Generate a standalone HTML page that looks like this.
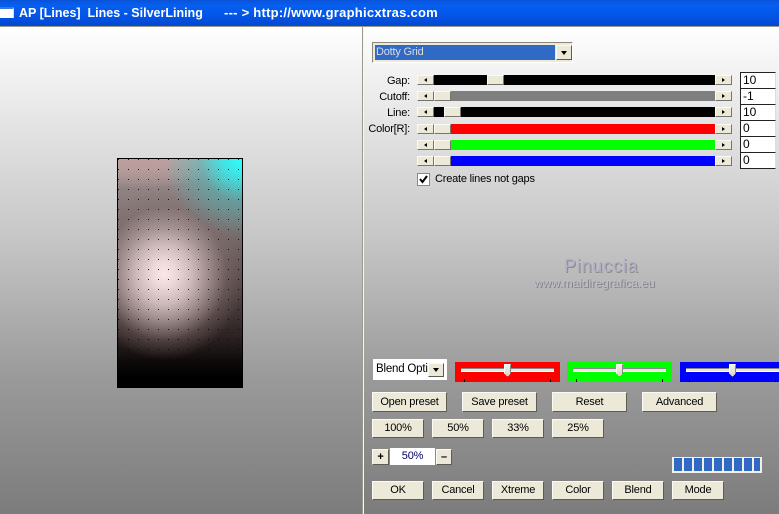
<!DOCTYPE html>
<html><head><meta charset="utf-8"><style>
html,body{margin:0;padding:0}
body{width:779px;height:514px;overflow:hidden;position:relative;font-family:"Liberation Sans",sans-serif;font-size:11px;letter-spacing:-.2px;color:#000}
div,span.a{position:absolute;box-sizing:border-box}
#bg{left:0;top:26px;width:779px;height:488px;background:linear-gradient(#fff 0,#f4f4f4 8%,#c4c4c4 45%,#9a9a9a 72%,#7c7c7c 100%)}
#title{left:0;top:0;width:779px;height:27px;background:linear-gradient(#0a52d8 0,#0660f0 20%,#0355e6 60%,#0348d0 100%);border-bottom:1px solid #9c9a8c}
.t{color:#fff;font-weight:bold;white-space:pre;top:5px;line-height:16px}
.b{background:#ece9d8;border:1px solid;border-color:#fbfaf4 #5e5c52 #5e5c52 #fbfaf4;text-align:center;font-size:11px;line-height:18px}
.tr{left:433px;width:282px;height:10px}
.sb{width:17px;height:10px;background:#ece9d8;border-top:1px solid #fbfaf4;border-left:1px solid #fbfaf4;border-bottom:1px solid #77756a;border-right:1px solid #77756a}
.sb:after{content:"";position:absolute;top:2px;left:6px;border:2px solid transparent}
.l:after{border-right:3px solid #000;border-left:0}
.r:after{border-left:3px solid #000;border-right:0}
.lab{width:100px;left:310px;text-align:right;font-size:11px;line-height:14px}
.in{left:740px;width:36px;height:17px;background:#fff;border:1px solid #000;border-color:#222 #ddd #222 #222;font-size:12px;line-height:14px;padding-left:2px;letter-spacing:0}
.p{top:362px;height:20px}
.st{top:368px;height:4px;background:#e8e8e0;border-top:1px solid #888;border-bottom:1px solid #fff}
.th{top:364px;width:7px;height:13px;background:linear-gradient(#f4f3ea,#d8d6c8);border:1px solid #8a887c;border-top-color:#fff;border-left-color:#fff;clip-path:polygon(0 0,100% 0,100% 70%,50% 100%,0 70%)}
.tk{top:379px;width:1px;height:3px;background:#000}
.sg{top:458px;width:8px;height:13px;background:#316ac5}
#pv{left:117px;top:158px;width:126px;height:230px;border:1px solid #000;
background:
radial-gradient(circle at 100% 0,#2dffff 0,rgba(45,240,240,.85) 18px,rgba(60,195,195,.45) 42px,rgba(90,170,170,0) 78px),
radial-gradient(ellipse 80px 86px at 46px 115px,#fde8e8 0,#ecd8d8 15%,#cdb9b9 35%,rgba(170,150,150,.85) 55%,rgba(130,110,110,.4) 78%,rgba(120,100,100,0) 100%),
radial-gradient(ellipse 75px 30px at 25px 0,#c09c9c 0,rgba(180,150,150,0) 100%),
linear-gradient(#b8a8a8 0,#928484 12%,#766868 35%,#504242 60%,#2c2222 78%,#0c0808 90%,#000 96%)}
</style></head><body>
<div id="bg"></div>
<div id="title"></div>
<div style="left:0;top:7px;width:14px;height:11px;background:#fff;border-top:2px solid #3a78e0;border-right:1px solid #cfe0f8"></div>
<div class="t" style="left:19px;font-size:12.5px;letter-spacing:0">AP [Lines]  Lines - SilverLining</div>
<div class="t" style="left:224px;font-size:13px;letter-spacing:.25px">--- &gt; http://www.graphicxtras.com</div>
<div style="left:362px;top:27px;width:1px;height:487px;background:#9c9a8c"></div>
<div style="left:363px;top:27px;width:1px;height:487px;background:#f6f6f6"></div>

<div id="pv"><svg width="124" height="228" style="position:absolute;left:0;top:0">
<defs><pattern id="d" x="0" y="10" width="10" height="10" patternUnits="userSpaceOnUse"><rect width="1" height="1" fill="#000" fill-opacity=".85"/></pattern></defs>
<rect width="124" height="228" fill="url(#d)"/></svg></div>

<!-- dropdown -->
<div style="left:372px;top:42px;width:201px;height:21px;background:#ece9d8;border:1px solid;border-color:#8a887c #fff #fff #8a887c"></div>
<div style="left:375px;top:45px;width:180px;height:15px;background:#316ac5;color:#ddd;padding-left:1px;line-height:15px;font-size:11px">Dotty Grid</div>
<div class="b" style="left:556px;top:45px;width:16px;height:15px"></div>
<div style="left:561px;top:51px;border:3px solid transparent;border-top:4px solid #000;border-bottom:0"></div>

<!-- sliders -->
<div class="lab" style="top:74px">Gap:</div>
<div class="lab" style="top:90px">Cutoff:</div>
<div class="lab" style="top:106px">Line:</div>
<div class="lab" style="top:122px">Color[R]:</div>

<div class="tr" style="top:75px;background:#000"></div>
<div class="tr" style="top:91px;background:#7f7f7f"></div>
<div class="tr" style="top:107px;background:#000"></div>
<div class="tr" style="top:124px;background:#f00"></div>
<div class="tr" style="top:140px;background:#0f0"></div>
<div class="tr" style="top:156px;background:#00f"></div>

<div class="sb l" style="left:417px;top:75px"></div><div class="sb r" style="left:715px;top:75px"></div>
<div class="sb l" style="left:417px;top:91px"></div><div class="sb r" style="left:715px;top:91px"></div>
<div class="sb l" style="left:417px;top:107px"></div><div class="sb r" style="left:715px;top:107px"></div>
<div class="sb l" style="left:417px;top:124px"></div><div class="sb r" style="left:715px;top:124px"></div>
<div class="sb l" style="left:417px;top:140px"></div><div class="sb r" style="left:715px;top:140px"></div>
<div class="sb l" style="left:417px;top:156px"></div><div class="sb r" style="left:715px;top:156px"></div>

<div class="sb" style="left:487px;top:75px"></div>
<div class="sb" style="left:434px;top:91px"></div>
<div class="sb" style="left:444px;top:107px"></div>
<div class="sb" style="left:434px;top:124px"></div>
<div class="sb" style="left:434px;top:140px"></div>
<div class="sb" style="left:434px;top:156px"></div>

<div class="in" style="top:72px">10</div>
<div class="in" style="top:88px">-1</div>
<div class="in" style="top:104px">10</div>
<div class="in" style="top:120px">0</div>
<div class="in" style="top:136px">0</div>
<div class="in" style="top:152px">0</div>

<div style="left:417px;top:173px;width:13px;height:13px;background:#fff;border:1px solid #888"><svg width="11" height="11" style="position:absolute;left:0;top:0"><path d="M2 5l2.5 3L9 2" fill="none" stroke="#000" stroke-width="2"/></svg></div>
<div style="left:435px;top:172px;font-size:11px;line-height:14px;white-space:pre">Create lines not gaps</div>

<!-- watermark -->
<div style="left:564px;top:256px;font-size:18px;line-height:20px;letter-spacing:.8px;color:#aeaec4;text-shadow:1px 1px 0 #8a8a8a;white-space:pre">Pinuccia</div>
<div style="left:534px;top:276px;font-size:12px;line-height:14px;letter-spacing:0;color:#bcbccc;text-shadow:1px 1px 0 #808080;white-space:pre">www.maidiregrafica.eu</div>

<!-- blend -->
<div style="left:373px;top:359px;width:74px;height:21px;background:#fff;font-size:11.5px;line-height:21px;padding-left:3px;white-space:nowrap;overflow:hidden">Blend Optio</div>
<div class="b" style="left:428px;top:363px;width:16px;height:14px"></div>
<div style="left:433px;top:368px;border:3px solid transparent;border-top:4px solid #000;border-bottom:0"></div>

<div class="p" style="left:455px;width:105px;background:#f00"></div>
<div class="p" style="left:567px;width:105px;background:#0f0"></div>
<div class="p" style="left:680px;width:99px;background:#00f"></div>
<div class="st" style="left:461px;width:93px"></div>
<div class="st" style="left:573px;width:93px"></div>
<div class="st" style="left:686px;width:93px"></div>
<div class="th" style="left:504px"></div>
<div class="th" style="left:616px"></div>
<div class="th" style="left:729px"></div>
<div class="tk" style="left:464px"></div><div class="tk" style="left:550px"></div>
<div class="tk" style="left:576px"></div><div class="tk" style="left:662px"></div>
<div class="tk" style="left:689px"></div><div class="tk" style="left:775px"></div>

<!-- buttons -->
<div class="b" style="left:372px;top:392px;width:75px;height:20px">Open preset</div>
<div class="b" style="left:462px;top:392px;width:75px;height:20px">Save preset</div>
<div class="b" style="left:552px;top:392px;width:75px;height:20px">Reset</div>
<div class="b" style="left:642px;top:392px;width:75px;height:20px">Advanced</div>

<div class="b" style="left:372px;top:419px;width:52px;height:19px;line-height:17px">100%</div>
<div class="b" style="left:432px;top:419px;width:52px;height:19px;line-height:17px">50%</div>
<div class="b" style="left:492px;top:419px;width:52px;height:19px;line-height:17px">33%</div>
<div class="b" style="left:552px;top:419px;width:52px;height:19px;line-height:17px">25%</div>

<div class="b" style="left:372px;top:449px;width:17px;height:16px;line-height:14px;font-weight:bold">+</div>
<div style="left:390px;top:448px;width:45px;height:17px;background:#fff;color:#000066;text-align:center;font-size:11px;line-height:16px">50%</div>
<div class="b" style="left:436px;top:449px;width:16px;height:16px;line-height:14px;font-weight:bold">–</div>

<div style="left:672px;top:457px;width:90px;height:16px;background:#f2f0e4"></div>
<div class="sg" style="left:674px"></div><div class="sg" style="left:684px"></div><div class="sg" style="left:694px"></div>
<div class="sg" style="left:704px"></div><div class="sg" style="left:714px"></div><div class="sg" style="left:724px"></div>
<div class="sg" style="left:734px"></div><div class="sg" style="left:744px"></div><div class="sg" style="left:754px;width:6px"></div>

<div class="b" style="left:372px;top:481px;width:52px;height:19px;line-height:17px">OK</div>
<div class="b" style="left:432px;top:481px;width:52px;height:19px;line-height:17px">Cancel</div>
<div class="b" style="left:492px;top:481px;width:52px;height:19px;line-height:17px">Xtreme</div>
<div class="b" style="left:552px;top:481px;width:52px;height:19px;line-height:17px">Color</div>
<div class="b" style="left:612px;top:481px;width:52px;height:19px;line-height:17px">Blend</div>
<div class="b" style="left:672px;top:481px;width:52px;height:19px;line-height:17px">Mode</div>
</body></html>
